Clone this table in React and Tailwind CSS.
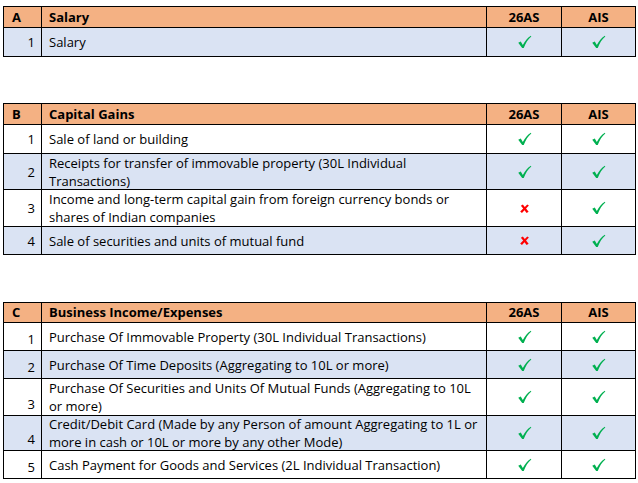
import React from "react";

const Check = () => (
  <svg width="15" height="14" viewBox="0 0 16 15" className="block">
    <path d="M1.3 8.3 L4 7 L6.2 10.8 C8.5 6.3 11 3.3 14.8 0.8 L15.3 1.5 C11.8 4.5 9.3 8.2 7.2 13.8 L5.5 13.8 Z" fill="#00B050" />
  </svg>
);

const Cross = () => (
  <svg width="11" height="11" viewBox="0 0 12 12" className="block">
    <path d="M2 3 L4.2 1.5 L6.3 4.3 L9 1.5 L10.8 2.8 L7.7 6 L10.5 9.6 L8.3 10.9 L6 7.8 L3.2 10.8 L1.3 9.4 L4.6 6 Z" fill="#FF0000" />
  </svg>
);

const Mark = ({ v }) => (v ? <Check /> : <Cross />);

function Table({ letter, title, headerH, rows, numBottom, className = "" }) {
  return (
    <div
      className={"ml-[3px] w-[633px] border-t border-x border-black text-[13px] text-black " + className}
      style={{ fontFamily: '"Open Sans", "Liberation Sans", sans-serif' }}
    >
      <div className="flex border-b border-black bg-[#F4B183] font-bold leading-none" style={{ height: headerH }}>
        <div className="w-[38px] shrink-0 border-r border-black pl-[8px] flex items-center">{letter}</div>
        <div className="w-[445px] shrink-0 border-r border-black pl-[7px] flex items-center">{title}</div>
        <div className="w-[75px] shrink-0 border-r border-black flex items-center justify-center">26AS</div>
        <div className="flex-1 flex items-center justify-center">AIS</div>
      </div>
      {rows.map((r, i) => (
        <div
          key={i}
          className={"flex border-b border-black leading-[18px] " + (r.blue ? "bg-[#DAE3F3]" : "bg-white")}
          style={{ height: r.h }}
        >
          <div
            className={
              "w-[38px] shrink-0 border-r border-black pr-[6px] flex justify-end " +
              (numBottom ? "items-end pb-[2px]" : "items-center")
            }
          >
            {i + 1}
          </div>
          <div className="w-[445px] shrink-0 border-r border-black pl-[7px] flex items-center">
            <div>{r.text}</div>
          </div>
          <div className="w-[75px] shrink-0 border-r border-black flex items-center justify-center">
            <Mark v={r.a} />
          </div>
          <div className="flex-1 flex items-center justify-center">
            <Mark v={r.b} />
          </div>
        </div>
      ))}
    </div>
  );
}

export default function App() {
  return (
    <div className="w-[638px] h-[483px] bg-white pt-[6px] overflow-hidden">
      <Table
        letter="A"
        title="Salary"
        headerH={21}
        rows={[{ text: "Salary", a: true, b: true, blue: true, h: 29 }]}
      />
      <Table
        className="mt-[46px]"
        letter="B"
        title="Capital Gains"
        headerH={21}
        rows={[
          { text: "Sale of land or building", a: true, b: true, blue: false, h: 29 },
          { text: <>Receipts for transfer of immovable property (30L Individual<br />Transactions)</>, a: true, b: true, blue: true, h: 36 },
          { text: <>Income and long-term capital gain from foreign currency bonds or<br />shares of Indian companies</>, a: false, b: true, blue: false, h: 37 },
          { text: "Sale of securities and units of mutual fund", a: false, b: true, blue: true, h: 28 },
        ]}
      />
      <Table
        className="mt-[47px]"
        letter="C"
        title="Business Income/Expenses"
        headerH={20}
        numBottom
        rows={[
          { text: "Purchase Of Immovable Property (30L Individual Transactions)", a: true, b: true, blue: false, h: 28 },
          { text: "Purchase Of Time Deposits (Aggregating to 10L or more)", a: true, b: true, blue: true, h: 28 },
          { text: <>Purchase Of Securities and Units Of Mutual Funds (Aggregating to 10L<br />or more)</>, a: true, b: true, blue: false, h: 37 },
          { text: <>Credit/Debit Card (Made by any Person of amount Aggregating to 1L or<br />more in cash or 10L or more by any other Mode)</>, a: true, b: true, blue: true, h: 35 },
          { text: "Cash Payment for Goods and Services (2L Individual Transaction)", a: true, b: true, blue: false, h: 28 },
        ]}
      />
    </div>
  );
}
